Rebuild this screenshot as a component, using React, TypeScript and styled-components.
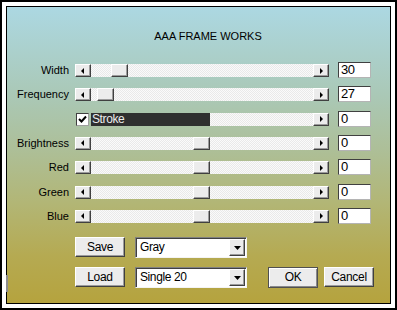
import React from "react";
import styled, { createGlobalStyle } from "styled-components";

const Global = createGlobalStyle`
  html, body { margin: 0; padding: 0; background: #fff; }
  body { font-family: "Liberation Sans", Arial, sans-serif; color: #000; }
`;

const Frame = styled.div`
  position: relative;
  width: 397px;
  height: 310px;
  box-sizing: border-box;
  border: 2px solid #000;
  padding: 4px;
  background: #fff;
`;

const Glitch = styled.div`
  position: absolute;
  left: 4px;
  top: 273px;
  width: 2px;
  height: 17px;
  background: #8c8c8c;
`;

const Panel = styled.div`
  box-sizing: border-box;
  height: 100%;
  border: 1px solid #000;
  padding-top: 23px;
  background: linear-gradient(
    180deg,
    #acd8e2 0%,
    #aac8b6 30%,
    #adbf98 48%,
    #b2b676 66%,
    #b5aa52 84%,
    #b5a33e 100%
  );
`;

const Title = styled.div`
  padding-left: 19px;
  text-align: center;
  font-size: 11px;
  line-height: 13px;
  white-space: nowrap;
`;

const Rows = styled.div`
  margin-top: 21px;
  display: grid;
  grid-template-columns: 62px 254px 36px;
  column-gap: 6px;
  grid-auto-rows: 13px;
  row-gap: 11.333px;
`;

const Label = styled.div`
  text-align: right;
  font-size: 11px;
  line-height: 13px;
  white-space: nowrap;
`;

const Slider = styled.div`
  display: flex;
  height: 13px;
`;

const bevel = `
  box-sizing: border-box;
  background: #ececec;
  border: 1px solid;
  border-color: #fff #404040 #404040 #fff;
  box-shadow: inset -1px -1px 0 #9c9c9c;
`;

const ScrollBtn = styled.div`
  ${bevel}
  flex: none;
  width: 16px;
  height: 13px;
  display: flex;
  align-items: center;
  justify-content: center;
`;

const Arrow = styled.span<{ $dir: "left" | "right" }>`
  width: 0;
  height: 0;
  border-top: 3px solid transparent;
  border-bottom: 3px solid transparent;
  ${(p) =>
    p.$dir === "left"
      ? "border-right: 3px solid #000; margin-right: 2px;"
      : "border-left: 3px solid #000; margin-left: 1px;"}
`;

const Track = styled.div`
  position: relative;
  flex: 1;
  background-color: #fafafa;
  background-image: repeating-conic-gradient(#e9e9e9 0 25%, #fafafa 0 50%);
  background-size: 2px 2px;
`;

const Thumb = styled.div`
  ${bevel}
  position: absolute;
  top: 0;
  width: 17px;
  height: 13px;
`;

const CheckBox = styled.div`
  flex: none;
  box-sizing: border-box;
  width: 13px;
  height: 13px;
  margin-left: 1px;
  background: #fff;
  border: 1px solid;
  border-color: #404040 #a0a0a0 #a0a0a0 #404040;
  display: flex;
  align-items: center;
  justify-content: center;
`;

const StrokeBar = styled.div`
  flex: none;
  width: 119px;
  margin-left: 2px;
  box-sizing: border-box;
  padding-left: 1px;
  background: #2f2f2f;
  color: #ececec;
  font-size: 12px;
  line-height: 13px;
  letter-spacing: -0.4px;
  white-space: nowrap;
`;

const ValueBox = styled.div`
  box-sizing: border-box;
  height: 16px;
  margin-top: -2px;
  margin-left: 3px;
  padding-left: 2px;
  background: #fff;
  border: 1px solid;
  border-color: #404040 #b4b4b4 #b4b4b4 #404040;
  font-size: 13px;
  line-height: 14px;
  letter-spacing: -0.4px;
`;

const Bottom = styled.div`
  margin-top: 14px;
  margin-left: 68px;
  display: flex;
  flex-direction: column;
  gap: 9px;
`;

const BottomRow = styled.div`
  display: flex;
  align-items: center;
  gap: 10px;
`;

const PushButton = styled.div<{ $default?: boolean }>`
  ${bevel}
  flex: none;
  width: 50px;
  height: ${(p) => (p.$default ? 21 : 20)}px;
  display: flex;
  align-items: center;
  justify-content: center;
  font-size: 12px;
  letter-spacing: -0.3px;
  ${(p) =>
    p.$default
      ? "border-color: #505050; box-shadow: inset 1px 1px 0 #fff, inset -1px -1px 0 #8a8a8a;"
      : ""}
`;

const Combo = styled.div`
  flex: none;
  box-sizing: border-box;
  width: 112px;
  height: 21px;
  display: flex;
  align-items: center;
  background: #fff;
  border: 1px solid;
  border-color: #808080 #f4f4f4 #f4f4f4 #808080;
  box-shadow: inset 1px 1px 0 #404040;
`;

const ComboText = styled.div`
  flex: 1;
  padding-left: 4px;
  font-size: 12px;
  letter-spacing: -0.4px;
  white-space: nowrap;
`;

const ComboBtn = styled.div`
  ${bevel}
  flex: none;
  width: 16px;
  height: 17px;
  margin: 1px 1px 0 0;
  display: flex;
  align-items: center;
  justify-content: center;
`;

const DialogButtons = styled.div`
  display: flex;
  gap: 6px;
  margin-left: 11px;
  align-self: flex-start;
  margin-top: 0;
`;

const DownArrow = () => (
  <svg width="7" height="4" viewBox="0 0 7 4">
    <polygon points="0,0 7,0 3.5,4" fill="#000" />
  </svg>
);

const Check = () => (
  <svg width="9" height="9" viewBox="0 0 9 9">
    <path d="M1 4 L3.5 6.5 L8 1.5" stroke="#000" strokeWidth="2" fill="none" />
  </svg>
);

type SliderRow = { label: string; thumb: number; value: string };

const rows: SliderRow[] = [
  { label: "Width", thumb: 20, value: "30" },
  { label: "Frequency", thumb: 6, value: "27" },
];

const rows2: SliderRow[] = [
  { label: "Brightness", thumb: 102, value: "0" },
  { label: "Red", thumb: 102, value: "0" },
  { label: "Green", thumb: 102, value: "0" },
  { label: "Blue", thumb: 102, value: "0" },
];

const SliderLine = ({ r }: { r: SliderRow }) => (
  <>
    <Label>{r.label}</Label>
    <Slider>
      <ScrollBtn>
        <Arrow $dir="left" />
      </ScrollBtn>
      <Track>
        <Thumb style={{ left: r.thumb }} />
      </Track>
      <ScrollBtn>
        <Arrow $dir="right" />
      </ScrollBtn>
    </Slider>
    <ValueBox>{r.value}</ValueBox>
  </>
);

export default function App() {
  return (
    <>
      <Global />
      <Frame>
        <Panel>
          <Title>AAA FRAME WORKS</Title>
          <Rows>
            {rows.map((r) => (
              <SliderLine key={r.label} r={r} />
            ))}
            <Label />
            <Slider>
              <CheckBox>
                <Check />
              </CheckBox>
              <StrokeBar>Stroke</StrokeBar>
              <Track />
              <ScrollBtn>
                <Arrow $dir="right" />
              </ScrollBtn>
            </Slider>
            <ValueBox>0</ValueBox>
            {rows2.map((r) => (
              <SliderLine key={r.label} r={r} />
            ))}
          </Rows>
          <Bottom>
            <BottomRow>
              <PushButton>Save</PushButton>
              <Combo>
                <ComboText>Gray</ComboText>
                <ComboBtn>
                  <DownArrow />
                </ComboBtn>
              </Combo>
            </BottomRow>
            <BottomRow>
              <PushButton>Load</PushButton>
              <Combo>
                <ComboText>Single 20</ComboText>
                <ComboBtn>
                  <DownArrow />
                </ComboBtn>
              </Combo>
              <DialogButtons>
                <PushButton $default>OK</PushButton>
                <PushButton $default={false}>Cancel</PushButton>
              </DialogButtons>
            </BottomRow>
          </Bottom>
        </Panel>
        <Glitch />
      </Frame>
    </>
  );
}
